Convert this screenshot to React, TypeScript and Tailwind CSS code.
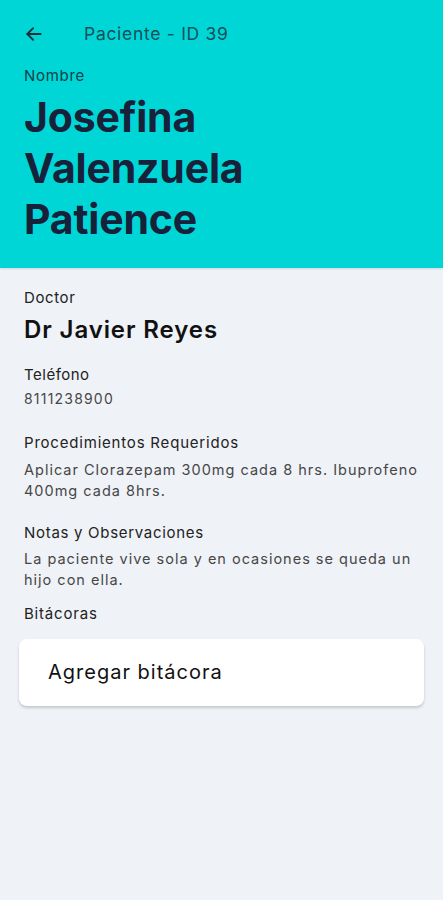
import React from "react";

export default function App() {
  const font = { fontFamily: "Inter, 'Noto Sans', sans-serif" };
  return (
    <div className="w-[443px] min-h-[900px] bg-[#eff2f7]" style={font}>
      <div className="bg-[#00d6d6] h-[268px] px-[24px] pt-[24px] shadow-[0_1px_2px_rgba(0,0,0,0.12)]">
        <div className="flex items-center h-[20px]">
          <svg width="20" height="20" viewBox="0 0 24 24" fill="none" stroke="#17313a" strokeWidth="2.2" strokeLinecap="round" strokeLinejoin="round">
            <path d="M20 12H4" />
            <path d="M11 5l-7 7 7 7" />
          </svg>
          <span className="ml-[40px] text-[17.5px] text-[#17505c] tracking-[0.7px]">Paciente - ID 39</span>
        </div>
        <div className="mt-[22px] text-[15px] text-[#123f4a] leading-[20px] tracking-[0.7px]">Nombre</div>
        <div className="mt-[5.5px] text-[41px] font-bold leading-[51px] text-[#18213a] tracking-[-0.2px]">
          Josefina<br />Valenzuela<br />Patience
        </div>
      </div>
      <div className="px-[24px] pt-[20px] text-[#222]">
        <div className="text-[15px] leading-[20px] tracking-[0.6px]">Doctor</div>
        <div className="mt-[7px] text-[24px] font-semibold leading-[30px] text-[#111] tracking-[0.9px]">Dr Javier Reyes</div>
        <div className="mt-[20px] text-[15px] leading-[20px] tracking-[0.5px]">Teléfono</div>
        <div className="mt-[4px] text-[14px] leading-[20px] text-[#474747] tracking-[1.2px]">8111238900</div>
        <div className="mt-[24px] text-[15px] leading-[20px] tracking-[0.8px]">Procedimientos Requeridos</div>
        <div className="mt-[5.5px] text-[14.5px] leading-[21px] text-[#474747] tracking-[1px]">
          Aplicar Clorazepam 300mg cada 8 hrs. Ibuprofeno 400mg cada 8hrs.
        </div>
        <div className="mt-[22.5px] text-[15px] leading-[20px] tracking-[0.7px]">Notas y Observaciones</div>
        <div className="mt-[4.5px] text-[14.5px] leading-[21px] text-[#474747] tracking-[1px]">
          La paciente vive sola y en ocasiones se queda un hijo con ella.
        </div>
        <div className="mt-[14px] text-[15px] leading-[20px] tracking-[0.8px]">Bitácoras</div>
      </div>
      <div className="mx-[19px] mt-[15px] h-[67px] bg-white rounded-[8px] shadow-[0_2px_3px_rgba(0,0,0,0.18)] flex items-center pl-[29px]">
        <span className="text-[20px] text-[#111] tracking-[1px]">Agregar bitácora</span>
      </div>
    </div>
  );
}
